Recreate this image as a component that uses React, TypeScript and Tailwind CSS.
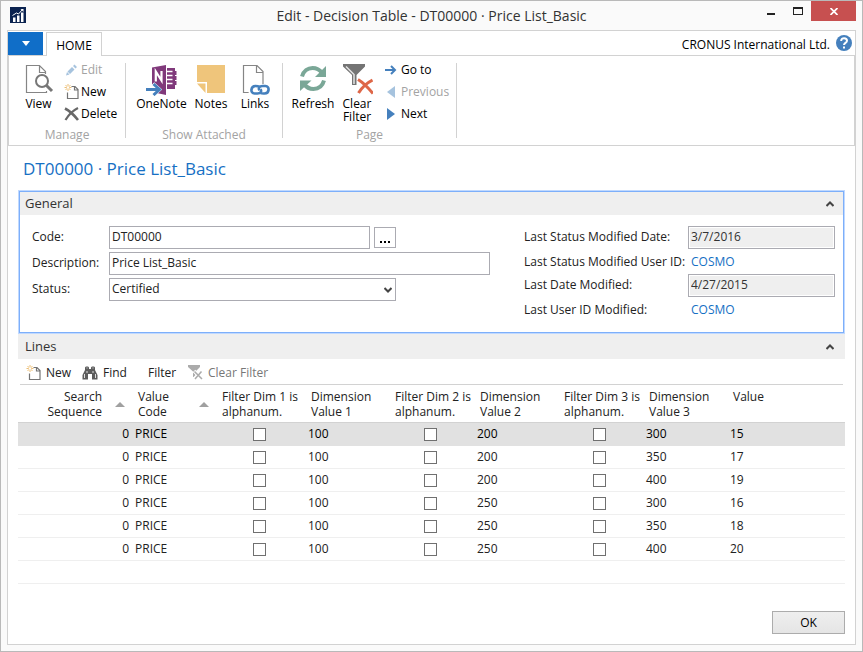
import type { ReactNode } from "react";

type Line = {
  sequence: number;
  code: string;
  dim1: string;
  dim2: string;
  dim3: string;
  value: string;
};

const lines: Line[] = [
  { sequence: 0, code: "PRICE", dim1: "100", dim2: "200", dim3: "300", value: "15" },
  { sequence: 0, code: "PRICE", dim1: "100", dim2: "200", dim3: "350", value: "17" },
  { sequence: 0, code: "PRICE", dim1: "100", dim2: "200", dim3: "400", value: "19" },
  { sequence: 0, code: "PRICE", dim1: "100", dim2: "250", dim3: "300", value: "16" },
  { sequence: 0, code: "PRICE", dim1: "100", dim2: "250", dim3: "350", value: "18" },
  { sequence: 0, code: "PRICE", dim1: "100", dim2: "250", dim3: "400", value: "20" },
];

function AppIcon() {
  return (
    <svg width="16" height="16" viewBox="0 0 16 16" className="shrink-0">
      <rect width="16" height="16" fill="#0b2350" />
      <path d="M3 10.5h2.500V15H3zM7 8.500h2.500V15H7zM11 5.500h2.500V15H11z" fill="#fff" />
      <path d="M2.500 8.500l4-2.500 2 1 4-4.500" stroke="#fff" fill="none" />
      <path d="M10.500 2h3v3z" fill="#fff" />
    </svg>
  );
}

function ViewIcon() {
  return (
    <svg width="32" height="32" viewBox="-2 0 32 32" fill="none">
      <path d="M21.500 27v1.500h-20v-27h13l6 6V10M14.500 1.500v7h6" stroke="#858585" strokeWidth="1.200" />
      <circle cx="17" cy="17" r="6" fill="#fff" stroke="#777" strokeWidth="2" />
      <path d="M21.500 21.500l5.500 5.500" stroke="#777" strokeWidth="3" />
    </svg>
  );
}

function OneNoteIcon() {
  return (
    <svg width="32" height="32" viewBox="0 0 32 32" fill="none">
      <path d="M21 4h8v3h1.500v4H29v1h1.500v4H29v1h1.500v4H29v4h-8z" fill="#80397b" />
      <path d="M21 7.500h5.500M21 11.500h5.500M21 15.500h5.500M21 19.500h5.500" stroke="#fff" strokeWidth="1.600" />
      <path d="M20.500 3v24" stroke="#fff" />
      <path d="M6 3.500L20 1v30L6 28z" fill="#80397b" />
      <path d="M9.800 17.500v-10l5.700 9V7" stroke="#fff" strokeWidth="2.200" />
      <path d="M0 25.500h11M6.500 20l6 5.500-6 5.500" stroke="#fff" strokeWidth="5" />
      <path d="M0 25.500h13M7.500 20l6 5.500-6 5.500" stroke="#4580bd" strokeWidth="3" />
    </svg>
  );
}

function NotesIcon() {
  return (
    <svg width="32" height="32" viewBox="0 0 32 32">
      <path d="M2 1h28v28H12V18H2z" fill="#efc57b" />
      <path d="M2 19.500h8.500V29z" fill="#efc57b" />
    </svg>
  );
}

function LinksIcon() {
  return (
    <svg width="32" height="32" viewBox="0 0 32 32" fill="none">
      <path d="M10 28.500H4.500v-27H18l6 6V20M17.500 1.500v7H24" stroke="#858585" strokeWidth="1.200" />
      <path d="M20 22.500h-4.500c-5 0-5 7.500 0 7.500h3c3 0 4.500-2.500 3-4.500" stroke="#fff" strokeWidth="5" />
      <path d="M20.500 22.800c-1-.6-2-.8-4-.8-5 0-5.500 7.500-1 7.500h3c3 0 4.500-2 3-4.200" stroke="#4580bd" strokeWidth="2.600" />
      <path d="M21.500 29c1 .6 2 .5 4 .5 5 0 5.500-7.500 1-7.500h-3c-3 0-4.500 2-3 4.200" stroke="#4580bd" strokeWidth="2.600" />
    </svg>
  );
}

function RefreshIcon() {
  return (
    <svg width="32" height="32" viewBox="0 0 32 32" fill="none" stroke="#7aa797" strokeWidth="4">
      <path d="M5 12.500C6.500 7 11 4 15.500 4c4 0 7 1.500 9.500 5" />
      <path d="M27 16.500c-1.500 5.500-5.500 8.500-10.500 8.500-4 0-7-1.500-9.500-5" />
      <path d="M29 2v11H18z" fill="#7aa797" stroke="none" />
      <path d="M3 27V16.500h11.500z" fill="#7aa797" stroke="none" />
    </svg>
  );
}

function ClearFilterIcon() {
  return (
    <svg width="32" height="32" viewBox="0 0 32 32" fill="none">
      <path d="M2 0h22v2.500L15.500 11v10H11V11L2 2.500z" fill="#747474" />
      <path d="M5 2.500l8 8V20" stroke="#e3e3e3" strokeWidth="1.500" />
      <path d="M17 15.500c5 3 10 8 15 14M31.500 16c-6 3-11 8-14 13" stroke="#de6748" strokeWidth="3" />
    </svg>
  );
}

function PencilIcon() {
  return (
    <svg width="14" height="14" viewBox="0 0 14 14">
      <path d="M2 12.500l1-3.500 2.500 2.500z" fill="#a6c3de" />
      <path d="M3.500 8.500l4.500-4.500 2.500 2.500L6 11zM9 3l1.500-1.500L13 4l-1.500 1.500z" fill="#a6c3de" />
    </svg>
  );
}

function NewIcon() {
  return (
    <svg width="15" height="16" viewBox="0 0 15 16" fill="none">
      <path d="M7.500 2.500h3.500l3 3v9H3.500V8.500M10.500 2.500v3.500H14" stroke="#747474" strokeWidth="1.200" />
      <path d="M4 0v7M.5 3.500h7M1.500 1l5 5M6.500 1l-5 5" stroke="#eab765" strokeWidth=".9" />
      <circle cx="4" cy="3.500" r="1.200" fill="#fff" />
    </svg>
  );
}

function DeleteIcon() {
  return (
    <svg width="15" height="14" viewBox="0 0 15 14" fill="none" stroke="#686868">
      <path d="M1 1.500c5 2.500 9 6.500 13 11.500" strokeWidth="2.600" />
      <path d="M14 1C8 4 4.500 8 1.500 13" strokeWidth="2.200" />
    </svg>
  );
}

function GoToIcon() {
  return (
    <svg width="12" height="10" viewBox="0 0 12 10" fill="none" stroke="#4580bd" strokeWidth="2">
      <path d="M0 5h10M6 1l4 4-4 4" />
    </svg>
  );
}

function TriangleIcon({ back = false }: { back?: boolean }) {
  return (
    <svg width="12" height="12" viewBox="0 0 12 12">
      {back ? <path d="M10 0v12L2 6z" fill="#a6c3de" /> : <path d="M2 0v12l8-6z" fill="#4580bd" />}
    </svg>
  );
}

function BinocularsIcon() {
  return (
    <svg width="16" height="14" viewBox="0 0 16 14">
      <path d="M3 1.500C3 0 7 0 7 1.500V3h2V1.500C9 0 13 0 13 1.500V4l2.500 5v4.500H10V8H6v5.500H.5V9L3 4z" fill="#5c5c5c" />
      <path d="M4.500 2h1M10.500 2h1M2.500 8v4M13.500 8v4M5 5v2M11 5v2" stroke="#fff" strokeWidth=".8" />
    </svg>
  );
}

function ClearFilterSmallIcon() {
  return (
    <svg width="15" height="15" viewBox="0 0 15 15" fill="none">
      <path d="M0 0h12v2L7.500 6.500V12H5V6.500L0 2z" fill="#ababab" />
      <path d="M6 6l8 8M14 6l-8 8" stroke="#fff" strokeWidth="3.500" />
      <path d="M6.500 6.500l7.500 7.500M13.500 6.500L7 14" stroke="#ababab" strokeWidth="1.500" />
    </svg>
  );
}

function Caret({ down = false }: { down?: boolean }) {
  return (
    <svg width="8" height="6" viewBox="0 0 8 6" fill="none" stroke="#444" strokeWidth="2">
      {down ? <path d="M.5 1L4 4.500 7.500 1" /> : <path d="M.5 5L4 1.500 7.500 5" />}
    </svg>
  );
}

function SortArrow() {
  return (
    <svg width="10" height="5" viewBox="0 0 10 5" className="shrink-0">
      <path d="M0 5l5-5 5 5z" fill="#a0a0a0" />
    </svg>
  );
}

function BigButton({ icon, label, width }: { icon: ReactNode; label: ReactNode; width: string }) {
  return (
    <button type="button" className={`flex flex-col items-center pt-[1px] leading-[13px] ${width}`}>
      {icon}
      <span className="mt-[1px] whitespace-nowrap">{label}</span>
    </button>
  );
}

function SmallButton({ icon, label, disabled = false }: { icon: ReactNode; label: string; disabled?: boolean }) {
  return (
    <button type="button" disabled={disabled} className="flex h-[22px] items-center gap-[2px] whitespace-nowrap disabled:text-[#a3a3a3]">
      <span className="flex w-4 justify-center">{icon}</span>
      {label}
    </button>
  );
}

function Group({ name, width, children }: { name: string; width: string; children: ReactNode }) {
  return (
    <section aria-label={name} className={`flex h-[75px] flex-col border-r border-[#d2d2d2] ${width}`}>
      <div className="flex h-16 shrink-0 items-start">{children}</div>
      <div className="shrink-0 text-center leading-4 text-[#a3a3a3]">{name}</div>
    </section>
  );
}

function SectionHeader({ title }: { title: string }) {
  return (
    <h2>
      <button type="button" aria-expanded="true" className="flex h-[25px] w-full items-center justify-between bg-[#efefef] pt-[1px] pr-[11px] pl-[7px] text-[13px] text-[#333]">
        {title}
        <Caret />
      </button>
    </h2>
  );
}

const labelStyle = "flex items-center whitespace-nowrap pb-[2px]";
const boxStyle = "h-[23px] border border-[#ababb2] bg-white px-[2px] pb-[2px] text-[#222]";
const readOnlyStyle = "h-[23px] w-[147px] border border-[#ababb2] bg-[#efefef] px-[2px] pb-[2px] text-[#333] shadow-[inset_0_0_0_1px_#fff]";

function Column({ children, sorted = false, right = false }: { children: ReactNode; sorted?: boolean; right?: boolean }) {
  return (
    <th scope="col" className="h-[38px] pt-[1px] pl-[6px] font-normal">
      <div className={`flex items-center pr-[7px] ${right ? "justify-end gap-[13px] text-right" : "justify-between text-left"}`}>
        <span className="whitespace-nowrap leading-[15px]">{children}</span>
        {sorted && <SortArrow />}
      </div>
    </th>
  );
}

function TickCell({ label }: { label: string }) {
  return (
    <td>
      <div className="flex justify-center pr-[2px]">
        <input type="checkbox" aria-label={label} className="mt-px size-[13px] appearance-none border border-[#707070] bg-white checked:bg-[#4580bd]" />
      </div>
    </td>
  );
}

export default function App() {
  return (
    <div className="flex min-h-screen flex-col border border-[#b9b9b9] bg-[#fafafa] px-[6px] pb-[6px] font-['Open_Sans','Noto_Sans',sans-serif] text-[12px] text-[#222]">
      <header className="flex h-[29px] items-start">
        <div className="flex w-[100px] pt-[6px] pl-[3px]">
          <AppIcon />
        </div>
        <h1 className="flex-1 text-center text-[14px] leading-[29px] text-[#333]">Edit - Decision Table - DT00000 · Price List_Basic</h1>
        <div className="flex w-[100px] justify-end">
          <button type="button" aria-label="Minimize" className="flex h-5 w-[27px] items-center justify-center">
            <span className="mt-[6px] h-[2px] w-2 bg-[#222]" />
          </button>
          <button type="button" aria-label="Maximize" className="flex h-5 w-[27px] items-center justify-center">
            <span className="h-2 w-[10px] border border-t-2 border-[#222]" />
          </button>
          <button type="button" aria-label="Close" className="flex h-5 w-[45px] items-center justify-center bg-[#c75050]">
            <svg width="8" height="7" viewBox="0 0 8 7" stroke="#fff" strokeWidth="1.700">
              <path d="M.5 0l7 7M7.500 0l-7 7" />
            </svg>
          </button>
        </div>
      </header>

      <main className="flex flex-1 flex-col border border-[#d2d2d2] bg-white">
        <nav className="flex h-[25px] items-end border-b border-[#d2d2d2] text-black">
          <button type="button" aria-label="Application menu" className="flex h-[23px] w-[35px] items-center justify-center bg-[#106ec8]">
            <svg width="8" height="5" viewBox="0 0 8 5">
              <path d="M0 0h8L4 5z" fill="#fff" />
            </svg>
          </button>
          <button type="button" className="-mb-px ml-[3px] flex h-6 w-14 items-center justify-center border border-b-0 border-[#d2d2d2] bg-white pt-[2px]">
            HOME
          </button>
          <div className="flex flex-1 items-center justify-end gap-[6px] pr-[3px]">
            <span>CRONUS International Ltd.</span>
            <button type="button" aria-label="Help" className="mb-1">
              <svg width="16" height="16" viewBox="0 0 16 16">
                <circle cx="8" cy="8" r="8" fill="#4580bd" />
                <path d="M5.200 6c0-4 5.800-3.500 5.800-.3C11 8 8 7.800 8 10" fill="none" stroke="#fff" strokeWidth="2" />
                <path d="M7 11.500h2v2H7z" fill="#fff" />
              </svg>
            </button>
          </div>
        </nav>

        <div className="flex h-[90px] border-x border-b border-[#d2d2d2] pt-[7px] text-black">
          <Group name="Manage" width="w-[117px]">
            <div className="flex pl-[7px]">
              <BigButton icon={<ViewIcon />} label="View" width="w-[45px]" />
              <div className="-mt-1 pl-[2px]">
                <SmallButton icon={<PencilIcon />} label="Edit" disabled />
                <SmallButton icon={<NewIcon />} label="New" />
                <SmallButton icon={<DeleteIcon />} label="Delete" />
              </div>
            </div>
          </Group>
          <Group name="Show Attached" width="w-[157px]">
            <div className="flex pl-[9px]">
              <BigButton icon={<OneNoteIcon />} label="OneNote" width="w-[53px]" />
              <BigButton icon={<NotesIcon />} label="Notes" width="w-[46px]" />
              <BigButton icon={<LinksIcon />} label="Links" width="w-[42px]" />
            </div>
          </Group>
          <Group name="Page" width="w-[174px]">
            <div className="flex pl-[7px]">
              <BigButton icon={<RefreshIcon />} label="Refresh" width="w-[46px]" />
              <BigButton icon={<ClearFilterIcon />} label={<>Clear<br />Filter</>} width="w-[42px]" />
              <div className="-mt-1 pl-[5px]">
                <SmallButton icon={<GoToIcon />} label="Go to" />
                <SmallButton icon={<TriangleIcon back />} label="Previous" disabled />
                <SmallButton icon={<TriangleIcon />} label="Next" />
              </div>
            </div>
          </Group>
        </div>

        <div className="flex flex-1 flex-col px-[10px] pb-[10px]">
          <h2 className="pt-[11px] pl-[5px] text-[17px] leading-[24px] text-[#1670c4]">DT00000 · Price List_Basic</h2>

          <section className="mt-[9px] border border-[#c0d9ff]">
            <div className="border border-[#7daffa]">
              <h2>
                <button type="button" aria-expanded="true" className="flex h-[23px] w-full items-center justify-between bg-[#efefef] pr-[9px] pl-[5px] text-[13px] text-[#333]">
                  General
                  <Caret />
                </button>
              </h2>
              <div className="flex justify-between gap-4 pt-[11px] pr-2 pb-[10px] pl-3">
                <div className="grid auto-rows-[23px] grid-cols-[77px_381px] gap-y-[3px]">
                  <label htmlFor="code" className={labelStyle}>Code:</label>
                  <div className="flex items-center gap-1">
                    <input id="code" defaultValue="DT00000" className={`w-[261px] ${boxStyle}`} />
                    <button type="button" aria-label="Look up code" className="flex h-[21px] w-[22px] items-end justify-center gap-[2px] border border-[#ababb2] bg-white pb-1">
                      <span className="size-[2px] bg-black" />
                      <span className="size-[2px] bg-black" />
                      <span className="size-[2px] bg-black" />
                    </button>
                  </div>
                  <label htmlFor="description" className={labelStyle}>Description:</label>
                  <input id="description" defaultValue="Price List_Basic" className={boxStyle} />
                  <label htmlFor="status" className={labelStyle}>Status:</label>
                  <div className="relative w-[287px]">
                    <select id="status" className={`block w-full appearance-none ${boxStyle}`}>
                      <option>Certified</option>
                    </select>
                    <span className="pointer-events-none absolute top-[9px] right-1">
                      <Caret down />
                    </span>
                  </div>
                </div>
                <div className="grid h-24 grid-cols-[164px_147px] grid-rows-[23px_25px_23px_25px]">
                  <label htmlFor="statusDate" className={labelStyle}>Last Status Modified Date:</label>
                  <input id="statusDate" readOnly value="3/7/2016" className={readOnlyStyle} />
                  <span className="flex items-center whitespace-nowrap">Last Status Modified User ID:</span>
                  <a href="#status-user" className="flex items-center pl-[3px] text-[#1670c4]">COSMO</a>
                  <label htmlFor="dateModified" className={labelStyle}>Last Date Modified:</label>
                  <input id="dateModified" readOnly value="4/27/2015" className={readOnlyStyle} />
                  <span className="flex items-center whitespace-nowrap">Last User ID Modified:</span>
                  <a href="#last-user" className="flex items-center pl-[3px] text-[#1670c4]">COSMO</a>
                </div>
              </div>
            </div>
          </section>

          <section>
            <SectionHeader title="Lines" />
            <div className="mx-[2px] flex h-[26px] items-center border-b border-[#d2d2d2] pt-[2px] pl-[6px]">
              <button type="button" className="flex w-[56px] items-center gap-[5px]"><NewIcon />New</button>
              <button type="button" className="flex w-[66px] items-center gap-[5px]"><BinocularsIcon />Find</button>
              <button type="button" className="w-10 text-left">Filter</button>
              <button type="button" disabled className="flex items-center gap-[5px] text-[#777]"><ClearFilterSmallIcon />Clear Filter</button>
            </div>
            <table className="w-full table-fixed border-separate border-spacing-0">
              <colgroup>
                <col className="w-[114px]" />
                <col className="w-[84px]" />
                <col className="w-[89px]" />
                <col className="w-[84px]" />
                <col className="w-[85px]" />
                <col className="w-[84px]" />
                <col className="w-[85px]" />
                <col className="w-[84px]" />
                <col />
              </colgroup>
              <thead>
                <tr className="[&>th]:border-b [&>th]:border-[#d2d2d2]">
                  <Column right sorted>Search<br />Sequence</Column>
                  <Column sorted>Value<br />Code</Column>
                  <Column>Filter Dim 1 is<br />alphanum.</Column>
                  <Column>Dimension<br />Value 1</Column>
                  <Column>Filter Dim 2 is<br />alphanum.</Column>
                  <Column>Dimension<br />Value 2</Column>
                  <Column>Filter Dim 3 is<br />alphanum.</Column>
                  <Column>Dimension<br />Value 3</Column>
                  <Column>Value<br />&nbsp;</Column>
                </tr>
              </thead>
              <tbody>
                {lines.map((line, i) => (
                  <tr key={i} className="first:bg-[#e1e1e1] first:text-black [&>td]:h-[23px] [&>td]:border-b [&>td]:border-[#efefef] [&>td]:px-[3px] [&>td]:leading-[22px] first:[&>td]:border-[#e1e1e1]">
                    <td className="text-right">{line.sequence}</td>
                    <td>{line.code}</td>
                    <TickCell label={`Filter Dim 1 is alphanum., line ${i + 1}`} />
                    <td>{line.dim1}</td>
                    <TickCell label={`Filter Dim 2 is alphanum., line ${i + 1}`} />
                    <td>{line.dim2}</td>
                    <TickCell label={`Filter Dim 3 is alphanum., line ${i + 1}`} />
                    <td>{line.dim3}</td>
                    <td>{line.value}</td>
                  </tr>
                ))}
                <tr>
                  <td colSpan={9} className="h-[23px] border-b border-[#efefef]" />
                </tr>
              </tbody>
            </table>
          </section>

          <div className="mt-auto flex justify-end pt-4">
            <button type="button" className="h-[23px] w-[73px] border border-[#acacac] bg-linear-to-b from-[#efefef] to-[#e5e5e5] text-black">OK</button>
          </div>
        </div>
      </main>
    </div>
  );
}
